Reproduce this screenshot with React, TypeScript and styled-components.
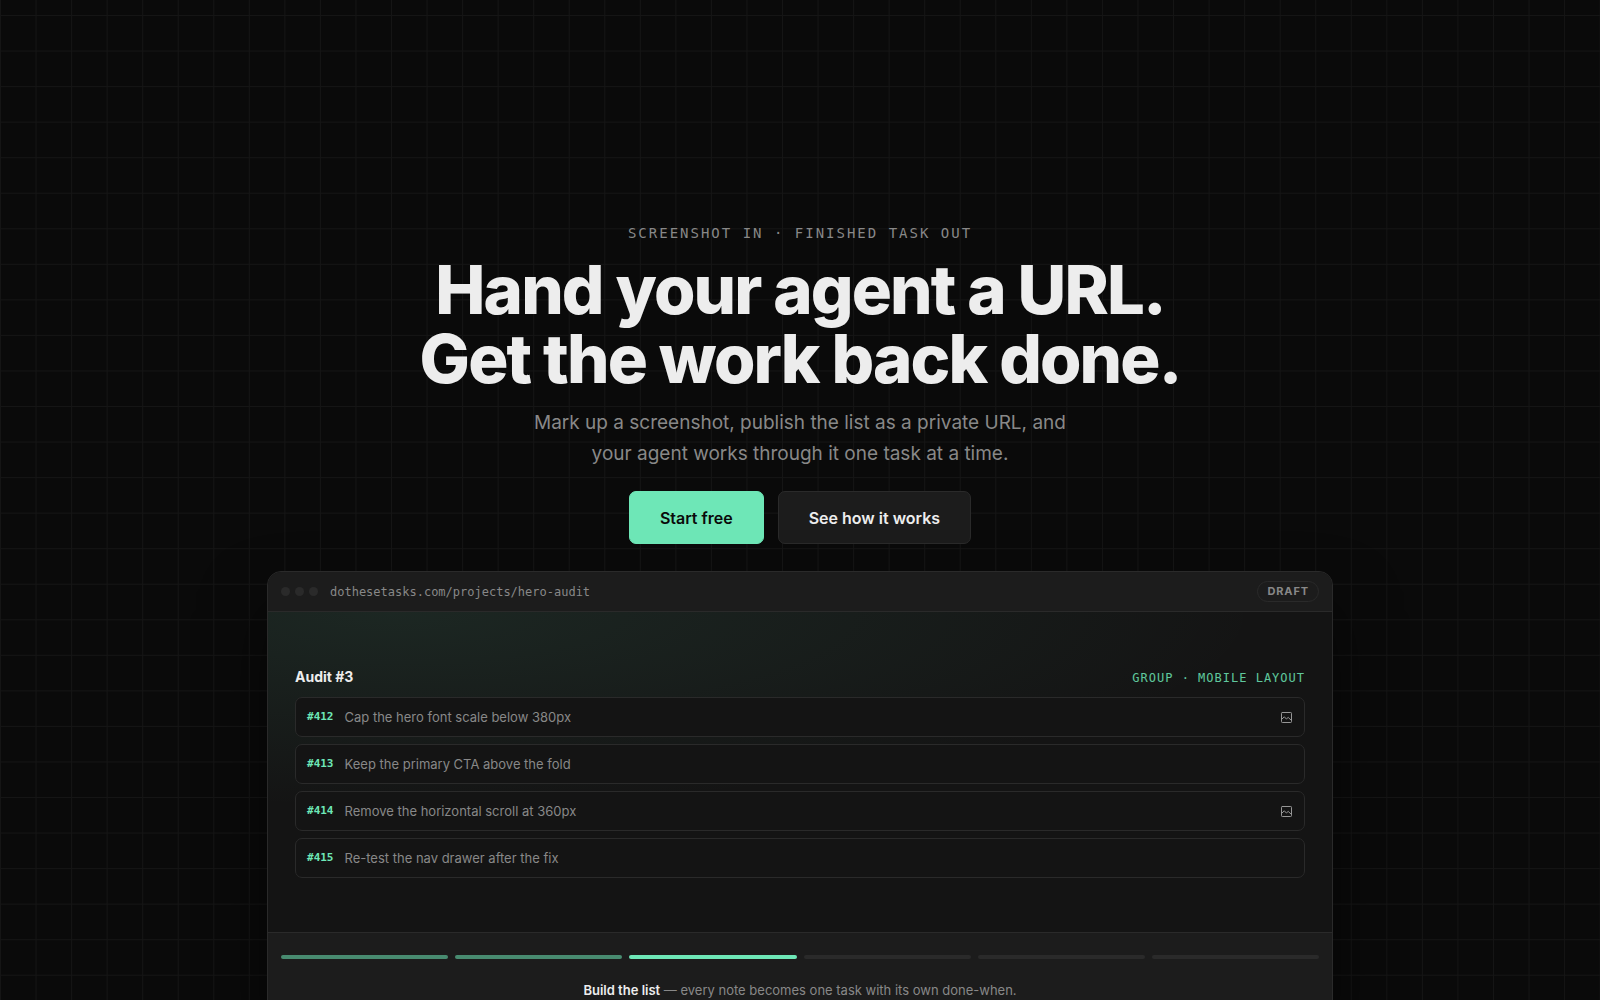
import React from "react";
import styled, { createGlobalStyle } from "styled-components";

const c = {
  bg: "#0a0a0a",
  surface: "#141414",
  raised: "#1c1c1c",
  line: "#2a2a2a",
  text: "#ededed",
  muted: "#888888",
  accent: "#6ee7b7",
};
const mono = `"DejaVu Sans Mono", monospace`;

const GlobalStyle = createGlobalStyle`
  *, *::before, *::after { box-sizing: border-box; }
  html { scrollbar-width: none; }
  body {
    margin: 0;
    background: ${c.bg};
    color: ${c.text};
    font-family: Inter, "Liberation Sans", sans-serif;
    -webkit-font-smoothing: antialiased;
  }
`;

const Hero = styled.main`
  display: flex;
  flex-direction: column;
  align-items: center;
  min-height: 100vh;
  padding: 224px 24px 64px;
  background-image:
    linear-gradient(to right, #151515 1px, transparent 1px),
    linear-gradient(to bottom, #151515 1px, transparent 1px);
  background-size: calc(100vw / 45) calc(100vw / 45);
  background-position: 0 15px;
`;

const Eyebrow = styled.p`
  margin: 0;
  font: 400 14px/18px ${mono};
  letter-spacing: 2px;
  text-transform: uppercase;
  color: ${c.muted};
`;

const Title = styled.h1`
  margin: 13px 0 0;
  font-size: 67px;
  line-height: 69px;
  font-weight: 800;
  letter-spacing: -0.028em;
  text-align: center;
`;

const Lead = styled.p`
  max-width: 560px;
  margin: 14px 0 0;
  font-size: 19px;
  line-height: 31px;
  text-align: center;
  color: ${c.muted};
`;

const Actions = styled.div`
  display: flex;
  gap: 14px;
  margin-top: 22px;
`;

const Button = styled.button<{ $primary?: boolean }>`
  height: 53px;
  padding: 0 30px;
  border: 1px solid ${(p) => (p.$primary ? c.accent : c.line)};
  border-radius: 7px;
  background: ${(p) => (p.$primary ? c.accent : c.raised)};
  color: ${(p) => (p.$primary ? c.bg : c.text)};
  font: inherit;
  font-size: 16px;
  font-weight: 600;
  cursor: pointer;
`;

const Browser = styled.section`
  width: 100%;
  max-width: 1066px;
  margin-top: 27px;
  overflow: hidden;
  border: 1px solid ${c.line};
  border-radius: 14px;
  background: ${c.surface};
  box-shadow: 0 36px 64px rgba(0, 0, 0, 0.5);
`;

const AddressBar = styled.header`
  display: flex;
  align-items: center;
  gap: 12px;
  height: 40px;
  padding: 0 13px;
  border-bottom: 1px solid ${c.line};
  background: ${c.raised};
`;

const Dots = styled.div`
  display: flex;
  gap: 5px;
`;

const Dot = styled.span`
  width: 9px;
  height: 9px;
  border-radius: 50%;
  background: ${c.line};
`;

const Address = styled.span`
  flex: 1;
  font: 400 12px/18px ${mono};
  color: ${c.muted};
`;

const Badge = styled.span`
  padding: 0 9px;
  border: 1px solid ${c.line};
  border-radius: 11px;
  font-size: 11px;
  line-height: 19px;
  font-weight: 700;
  letter-spacing: 0.08em;
  color: ${c.muted};
`;

const Stage = styled.div`
  display: flex;
  flex-direction: column;
  justify-content: center;
  min-height: 320px;
  padding: 27px;
  background: radial-gradient(ellipse 120% 90% at 12% 0%, rgba(110, 231, 183, 0.09), transparent 68%);
`;

const StageHead = styled.div`
  display: flex;
  align-items: baseline;
  justify-content: space-between;
  margin-bottom: 8px;
`;

const StageTitle = styled.h2`
  margin: 0;
  font-size: 14px;
  line-height: 22px;
  font-weight: 700;
`;

const Group = styled.span`
  font: 400 12px/22px ${mono};
  letter-spacing: 1px;
  color: ${c.accent};
  opacity: 0.85;
`;

const Tasks = styled.ul`
  display: flex;
  flex-direction: column;
  gap: 7px;
  margin: 0;
  padding: 0;
  list-style: none;
`;

const Task = styled.li`
  display: flex;
  align-items: center;
  gap: 11px;
  height: 40px;
  padding: 0 11px;
  border: 1px solid ${c.line};
  border-radius: 7px;
  background: ${c.surface};
`;

const TaskId = styled.span`
  font: 700 11px/18px ${mono};
  color: ${c.accent};
`;

const TaskText = styled.span`
  flex: 1;
  font-size: 13px;
  line-height: 20px;
  color: ${c.muted};
`;

const Foot = styled.footer`
  padding: 22px 13px 24px;
  border-top: 1px solid ${c.line};
  background: ${c.raised};
`;

const Steps = styled.div`
  display: flex;
  gap: 7px;
`;

const Step = styled.span<{ $state: "done" | "active" | "todo" }>`
  flex: 1;
  height: 4px;
  border-radius: 2px;
  background: ${(p) => (p.$state === "todo" ? c.line : c.accent)};
  opacity: ${(p) => (p.$state === "done" ? 0.55 : 1)};
`;

const Caption = styled.p`
  margin: 21px 0 0;
  font-size: 13px;
  line-height: 20px;
  text-align: center;
  color: ${c.muted};

  strong {
    font-weight: 600;
    color: ${c.text};
  }
`;

const ImageIcon = () => (
  <svg width="13" height="13" viewBox="0 0 13 13" fill="none" stroke="#969696" strokeLinejoin="round" strokeLinecap="round" aria-hidden="true">
    <rect x="1.5" y="1.5" width="10" height="10" rx="0.8" />
    <path d="M2 8 4.3 5.8 6.4 8 8.2 6.4 11 9" />
  </svg>
);

const tasks = [
  { id: 412, text: "Cap the hero font scale below 380px", shot: true },
  { id: 413, text: "Keep the primary CTA above the fold", shot: false },
  { id: 414, text: "Remove the horizontal scroll at 360px", shot: true },
  { id: 415, text: "Re-test the nav drawer after the fix", shot: false },
];

const steps = ["done", "done", "active", "todo", "todo", "todo"] as const;

export default function App() {
  return (
    <>
      <GlobalStyle />
      <Hero>
        <Eyebrow>Screenshot in · Finished task out</Eyebrow>
        <Title>
          Hand your agent a URL.
          <br />
          Get the work back done.
        </Title>
        <Lead>
          Mark up a screenshot, publish the list as a private URL, and your agent works through it one task at a time.
        </Lead>
        <Actions>
          <Button type="button" $primary>Start free</Button>
          <Button type="button">See how it works</Button>
        </Actions>
        <Browser>
          <AddressBar>
            <Dots>
              <Dot />
              <Dot />
              <Dot />
            </Dots>
            <Address>dothesetasks.com/projects/hero-audit</Address>
            <Badge>DRAFT</Badge>
          </AddressBar>
          <Stage>
            <StageHead>
              <StageTitle>Audit #3</StageTitle>
              <Group>GROUP · MOBILE LAYOUT</Group>
            </StageHead>
            <Tasks>
              {tasks.map((t) => (
                <Task key={t.id}>
                  <TaskId>#{t.id}</TaskId>
                  <TaskText>{t.text}</TaskText>
                  {t.shot && <ImageIcon />}
                </Task>
              ))}
            </Tasks>
          </Stage>
          <Foot>
            <Steps>
              {steps.map((s, i) => (
                <Step key={i} $state={s} />
              ))}
            </Steps>
            <Caption>
              <strong>Build the list</strong> — every note becomes one task with its own done-when.
            </Caption>
          </Foot>
        </Browser>
      </Hero>
    </>
  );
}
